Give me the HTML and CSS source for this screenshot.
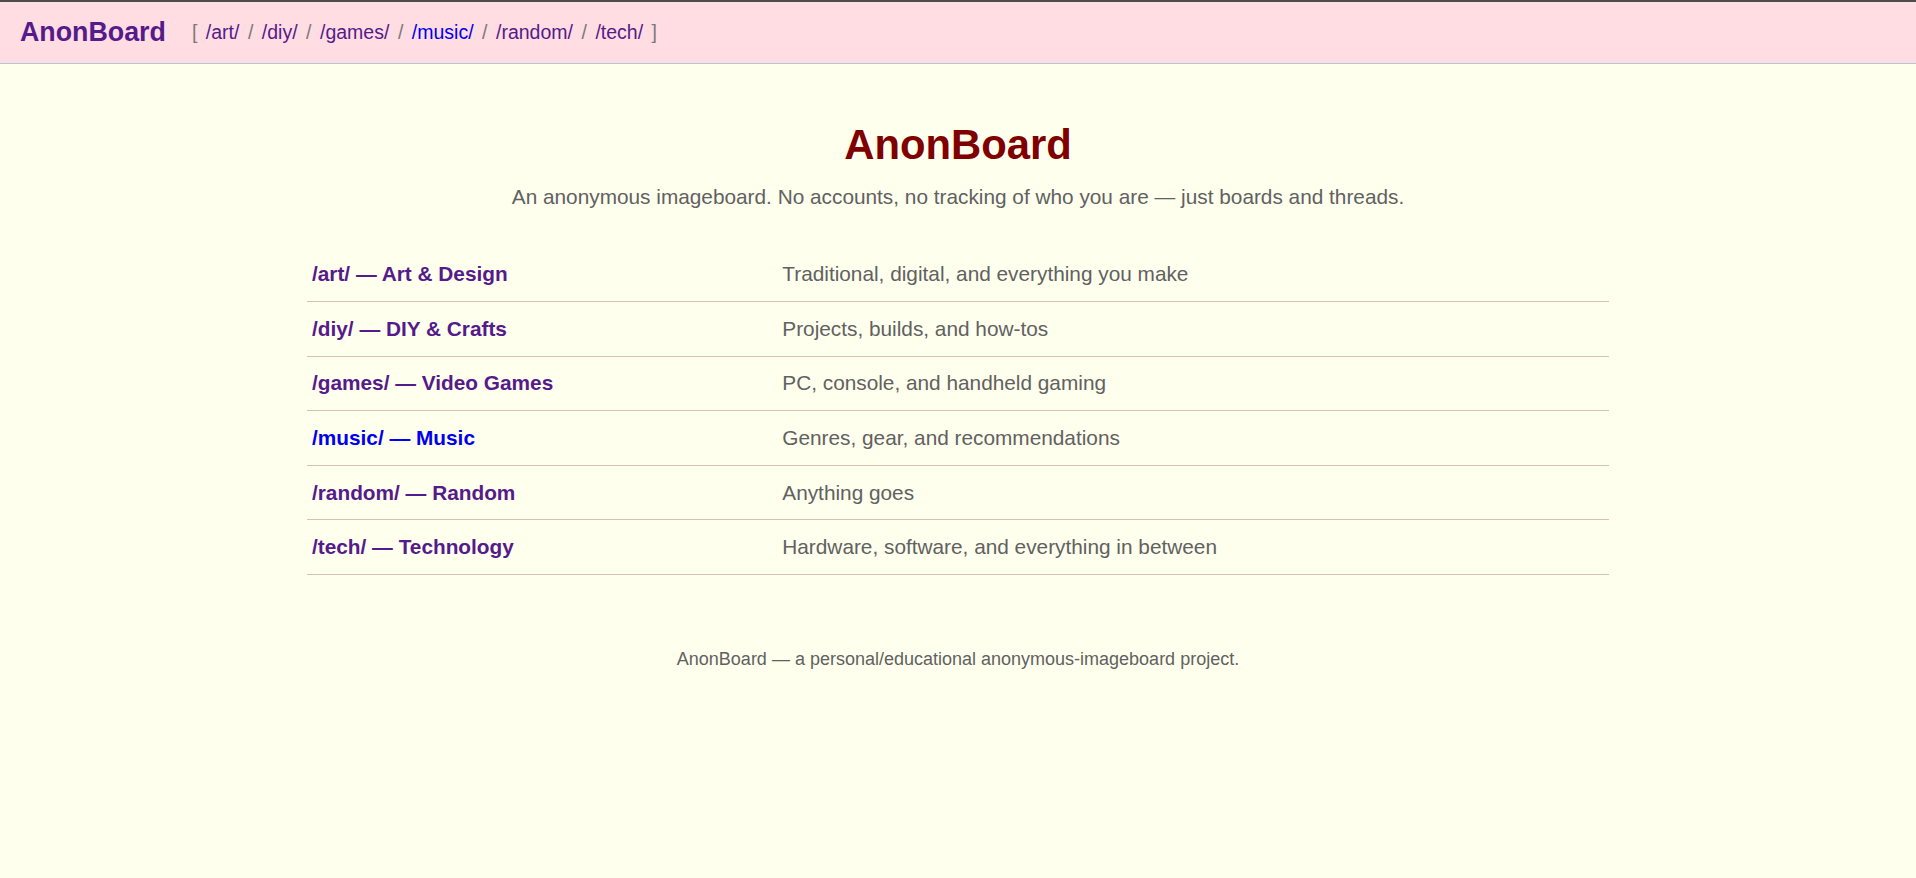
FILE: index.html
```html
<!DOCTYPE html>
<html lang="en">

<head>
    <meta charset="utf-8">
    <meta name="viewport" content="width=device-width, initial-scale=1.0">
    <title>AnonBoard</title>
    <link rel="stylesheet" href="styles.css">
</head>

<body>
    <header class="topbar">
        <a class="brand visited" href="#">AnonBoard</a>
        <nav class="boardnav">
            <span class="bracket">[</span>
            <a class="visited" href="#">/art/</a>
            <span class="sep">/</span>
            <a class="visited" href="#">/diy/</a>
            <span class="sep">/</span>
            <a class="visited" href="#">/games/</a>
            <span class="sep">/</span>
            <a class="fresh" href="#">/music/</a>
            <span class="sep">/</span>
            <a class="visited" href="#">/random/</a>
            <span class="sep">/</span>
            <a class="visited" href="#">/tech/</a>
            <span class="bracket">]</span>
        </nav>
    </header>

    <main class="container">
        <h1>AnonBoard</h1>
        <p class="tagline">An anonymous imageboard. No accounts, no tracking of who you are — just boards and threads.</p>

        <div class="boards">
            <div class="board-row">
                <a class="board-name visited" href="#">/art/ — Art &amp; Design</a>
                <span class="board-desc">Traditional, digital, and everything you make</span>
            </div>
            <div class="board-row">
                <a class="board-name visited" href="#">/diy/ — DIY &amp; Crafts</a>
                <span class="board-desc">Projects, builds, and how-tos</span>
            </div>
            <div class="board-row">
                <a class="board-name visited" href="#">/games/ — Video Games</a>
                <span class="board-desc">PC, console, and handheld gaming</span>
            </div>
            <div class="board-row">
                <a class="board-name fresh" href="#">/music/ — Music</a>
                <span class="board-desc">Genres, gear, and recommendations</span>
            </div>
            <div class="board-row">
                <a class="board-name visited" href="#">/random/ — Random</a>
                <span class="board-desc">Anything goes</span>
            </div>
            <div class="board-row">
                <a class="board-name visited" href="#">/tech/ — Technology</a>
                <span class="board-desc">Hardware, software, and everything in between</span>
            </div>
        </div>

        <footer class="footer">AnonBoard — a personal/educational anonymous-imageboard project.</footer>
    </main>
</body>

</html>
```

FILE: styles.css
```css
* {
    box-sizing: border-box;
}

body {
    margin: 0;
    background-color: #ffffee;
    font-family: 'Liberation Sans', Arial, sans-serif;
    font-size: 20.8px;
    color: #616161;
}

a {
    text-decoration: none;
}

a.visited {
    color: #551a8b;
}

a.fresh {
    color: #0000ee;
}

/* top bar */
.topbar {
    display: flex;
    align-items: center;
    gap: 26px;
    height: 64px;
    padding: 0 20px;
    background-color: #ffdde2;
    border-top: 2px solid #4d4d4d;
    border-bottom: 1px solid #b7c5d9;
}

.brand {
    font-size: 26.8px;
    font-weight: bold;
}

.boardnav {
    display: flex;
    align-items: center;
    gap: 8.5px;
    font-size: 19.5px;
}

.boardnav .bracket,
.boardnav .sep {
    color: #7a7a7a;
}

/* board list */
.container {
    max-width: 1302px;
    margin: 0 auto;
}

h1 {
    margin: 57px 0 0;
    text-align: center;
    font-size: 41.8px;
    color: #800000;
}

.tagline {
    margin: 16px 0 0;
    text-align: center;
}

.boards {
    margin-top: 38.5px;
}

.board-row {
    display: grid;
    grid-template-columns: 36.4% 1fr;
    padding: 14.8px 5px;
    border-bottom: 1px solid #d9bfb7;
}

.board-name {
    font-weight: bold;
}

.footer {
    margin-top: 74px;
    text-align: center;
    font-size: 18px;
}
```
